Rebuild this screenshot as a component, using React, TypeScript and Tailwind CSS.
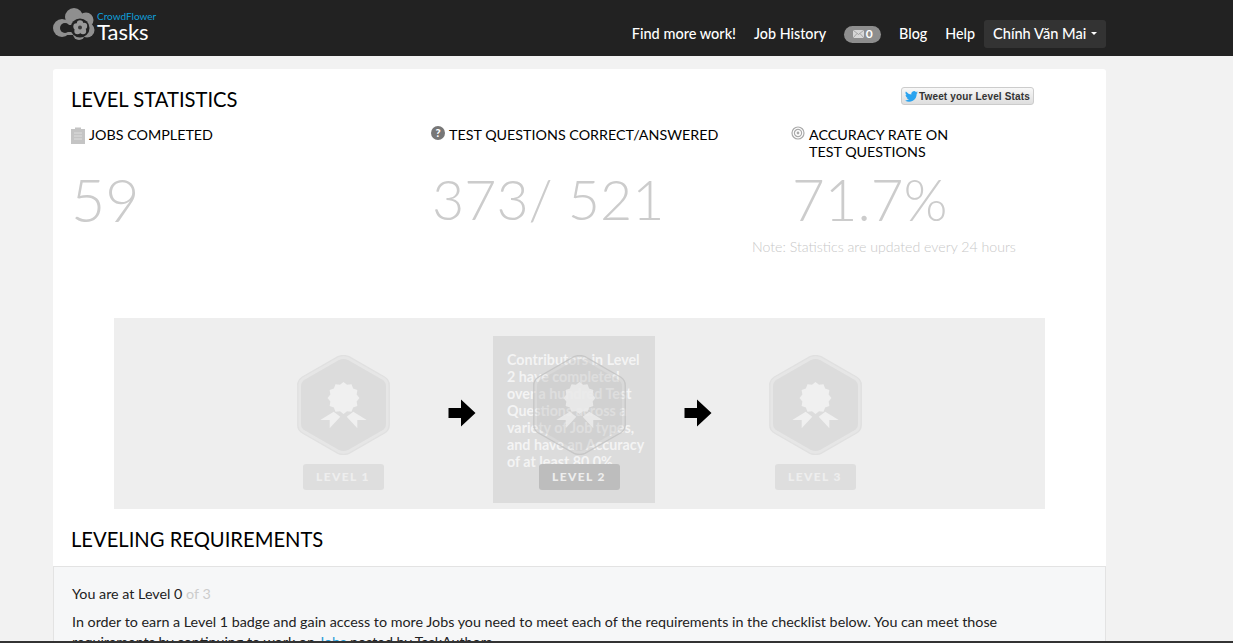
import React from "react";

const star = Array.from({ length: 24 })
  .map((_, i) => {
    const a = (i * Math.PI) / 12 - Math.PI / 2;
    const r = i % 2 === 0 ? 16 : 13.6;
    return `${(46.5 + r * Math.cos(a)).toFixed(2)},${(43 + r * Math.sin(a)).toFixed(2)}`;
  })
  .join(" ");

const Badge = ({ label, dark }: { label: string; dark?: boolean }) => (
  <div className="relative w-[162px] flex flex-col items-center">
    <svg width="93" height="100" viewBox="0 0 93 100" className="block">
      <path
        d="M41 1.7 Q46.5 -0.6 52 1.7 L87.5 22 Q92.2 25 92.2 30 L92.2 70 Q92.2 75 87.5 78 L52 98.3 Q46.5 100.6 41 98.3 L5.5 78 Q0.8 75 0.8 70 L0.8 30 Q0.8 25 5.5 22 Z"
        fill={dark ? "#c9c9c9" : "#e6e6e6"}
        fillOpacity={dark ? 0.15 : 1}
        stroke={dark ? "#c2c2c2" : "#e0e0e0"}
        strokeOpacity={dark ? 0.8 : 1}
        strokeWidth="1.4"
      />
      <path
        d="M42 5 Q46.5 3 51 5 L85 24.5 Q89 27 89 31 L89 69 Q89 73 85 75.5 L51 95 Q46.5 97 42 95 L8 75.5 Q4 73 4 69 L4 31 Q4 27 8 24.5 Z"
        fill={dark ? "#c4c4c4" : "#dcdcdc"}
        fillOpacity={dark ? 0.35 : 1}
      />
      <polygon points={star} fill={dark ? "#ececec" : "#f0f0f0"} fillOpacity={dark ? 0.85 : 1} />
      <path
        d="M23.3 65 L36.7 56.7 L43.3 61.7 L32.7 73.3 L32.7 65 Z M69.7 65 L56.3 56.7 L49.7 61.7 L60.3 73.3 L60.3 65 Z"
        fill={dark ? "#ececec" : "#f0f0f0"}
        fillOpacity={dark ? 0.85 : 1}
      />
    </svg>
    <div
      className={`mt-[9px] w-[81px] h-[26px] rounded-[3px] flex items-center justify-center text-[12px] font-black tracking-[1.4px] text-[#eeeeee] ${
        dark ? "bg-[#bdbdbd]" : "bg-[#dedede]"
      }`}
    >
      {label}
    </div>
  </div>
);

const Arrow = () => (
  <svg width="28" height="28" viewBox="0 0 28 28" className="block mt-[44px] ml-[1px] -mr-[1px]">
    <path d="M0.5 9 H13 V0.5 L27.5 14 L13 27.5 V19 H0.5 Z" fill="#000" />
  </svg>
);

export default function App() {
  return (
    <div className="h-[643px] overflow-hidden bg-[#f2f2f2] relative font-['Lato','Liberation_Sans',sans-serif] text-[#000]">
      <header className="h-[56px] bg-[#222222]">
        <div className="ml-[53px] w-[1053px] flex justify-between">
          <div className="flex items-start pt-[8px]">
            <svg width="42" height="32" viewBox="0 0 42 32" className="block">
              <circle cx="9" cy="20" r="9" fill="#8f8f8f" />
              <circle cx="21" cy="9" r="9" fill="#8f8f8f" />
              <circle cx="33" cy="12" r="7.5" fill="#8f8f8f" />
              <circle cx="34" cy="22" r="7.5" fill="#8f8f8f" />
              <circle cx="26" cy="26" r="6" fill="#8f8f8f" />
              <rect x="12" y="13" width="16" height="14" fill="#8f8f8f" />
              <circle cx="12" cy="20" r="5" fill="#222222" />
              <rect x="12" y="17" width="8" height="7" fill="#222222" />
              <circle cx="27" cy="20" r="9.5" fill="#222222" />
              <circle cx="23.5" cy="18.5" r="3.2" fill="#9a9a9a" />
              <circle cx="27" cy="15.5" r="3.2" fill="#9a9a9a" />
              <circle cx="31" cy="18" r="3.2" fill="#9a9a9a" />
              <circle cx="30" cy="23" r="3.2" fill="#9a9a9a" />
              <circle cx="24.5" cy="23" r="3.2" fill="#9a9a9a" />
              <circle cx="27" cy="19.5" r="2" fill="#3a3a3a" />
            </svg>
            <div className="ml-[2px] mt-[3px] flex flex-col">
              <span className="text-[10px] leading-[11px] text-[#0f9fdb]">CrowdFlower</span>
              <span className="text-[22px] leading-[19px] text-white">Tasks</span>
            </div>
          </div>
          <nav className="flex items-center h-[28px] mt-[20px] text-white text-[14.3px] font-medium">
            <a className="mr-[18px] text-[14.5px]">Find more work!</a>
            <a className="mr-[18px]">Job History</a>
            <span className="mr-[18px] w-[37px] h-[17px] rounded-full bg-[#8e8e8e] flex items-center justify-center gap-[2px] text-[12px] font-bold">
              <svg width="11" height="8" viewBox="0 0 11 8">
                <rect width="11" height="8" fill="#d8d8d8" />
                <path d="M0 0 L5.5 4.5 L11 0 M0 8 L4 3.5 M11 8 L7 3.5" fill="none" stroke="#8e8e8e" strokeWidth="0.7" />
              </svg>
              0
            </span>
            <a className="mr-[18px]">Blog</a>
            <a className="mr-[9px]">Help</a>
            <button className="h-[28px] pl-[9px] w-[122px] rounded-[3px] bg-[#333333] flex items-center whitespace-nowrap text-white text-[14.6px] font-medium">
              Chính Văn Mai
              <span className="ml-[5px] mb-[2px] w-0 h-0 border-x-[3px] border-x-transparent border-t-[3px] border-t-white" />
            </button>
          </nav>
        </div>
      </header>

      <main className="ml-[53px] w-[1053px] mt-[13px] bg-white rounded-t-[3px]">
        <div className="px-[18px] pt-[19px]">
          <div className="flex justify-between items-start">
            <h2 className="text-[20.2px] leading-[22px] font-normal">LEVEL STATISTICS</h2>
            <button className="mr-[54px] -mt-[1px] w-[133px] h-[18px] rounded-[3px] border border-[#cccccc] bg-gradient-to-b from-[#f8f8f8] to-[#dedede] flex items-center pl-[3px] gap-[1px] whitespace-nowrap text-[10px] font-bold text-[#333333] tracking-[0.15px] font-['Liberation_Sans',sans-serif]">
              <svg width="13" height="11" viewBox="0 0 24 20">
                <path d="M24 2.4a9.8 9.8 0 0 1-2.8.8A4.9 4.9 0 0 0 23.3.5a9.8 9.8 0 0 1-3.1 1.2 4.9 4.9 0 0 0-8.4 4.5A14 14 0 0 1 1.7.9a4.9 4.9 0 0 0 1.5 6.6 4.9 4.9 0 0 1-2.2-.6 4.9 4.9 0 0 0 3.9 4.9 4.9 4.9 0 0 1-2.2.1 4.9 4.9 0 0 0 4.6 3.4A9.9 9.9 0 0 1 0 17.3 14 14 0 0 0 21.5 5a10 10 0 0 0 2.5-2.6Z" fill="#2aa3ef" />
              </svg>
              Tweet your Level Stats
            </button>
          </div>

          <div className="grid grid-cols-[360px_360px_1fr] mt-[16px]">
            <div>
              <div className="flex text-[14.3px] leading-[17px]">
                <svg width="14" height="17" viewBox="0 0 14 17" className="mr-[4px] mt-[1px]">
                  <path d="M0 2 H4 V0.5 H10 V2 H14 V17 H0 Z" fill="#c4c4c4" />
                  <path d="M3 6 H11 M3 9 H11 M3 12 H11" stroke="#dddddd" strokeWidth="1" />
                </svg>
                JOBS COMPLETED
              </div>
              <div className="mt-[26px] text-[59px] leading-[60px] font-light text-[#cccccc]">59</div>
            </div>
            <div>
              <div className="flex text-[14.3px] leading-[17px]">
                <svg width="14" height="14" viewBox="0 0 14 14" className="mr-[4px]">
                  <circle cx="7" cy="7" r="7" fill="#777777" />
                  <text x="7" y="11" textAnchor="middle" fontSize="11" fontWeight="900" fill="#ffffff" fontFamily="Lato">?</text>
                </svg>
                TEST QUESTIONS CORRECT/ANSWERED
              </div>
              <div className="mt-[26px] ml-[1px] text-[55.5px] leading-[60px] font-light text-[#cccccc]">373/ 521</div>
            </div>
            <div>
              <div className="flex text-[14.3px] leading-[17px]">
                <svg width="14" height="14" viewBox="0 0 14 14" className="mr-[4px]">
                  <circle cx="7" cy="7" r="6" fill="none" stroke="#aaaaaa" strokeWidth="1.2" />
                  <circle cx="7" cy="7" r="3.6" fill="none" stroke="#aaaaaa" strokeWidth="1.2" />
                  <circle cx="7" cy="7" r="1.4" fill="#aaaaaa" />
                </svg>
                <span>ACCURACY RATE ON<br />TEST QUESTIONS</span>
              </div>
              <div className="mt-[9px] ml-[1px] text-[56.5px] leading-[60px] font-light text-[#cccccc]">71.7%</div>
            </div>
          </div>
          <p className="mt-[7px] ml-[681px] text-[14.15px] leading-[20px] font-light text-[#c8c8c8]">Note: Statistics are updated every 24 hours</p>
        </div>

        <section className="ml-[61px] mt-[61px] w-[931px] h-[191px] bg-[#eeeeee] flex items-start gap-[23px] pl-[148px] pt-[37px]">
          <Badge label="LEVEL 1" />
          <Arrow />
          <div className="relative">
            <div className="absolute -left-[5px] -top-[19px] w-[162px] h-[167px] bg-[#dcdcdc] pl-[14px] pt-[15px] pr-[8px]">
              <p className="text-[14.3px] leading-[17px] font-bold text-white/70">
                Contributors in Level 2 have completed over a hundred Test Questions across a variety of Job types, and have an Accuracy of at least 80.0%.
              </p>
            </div>
            <Badge label="LEVEL 2" dark />
          </div>
          <Arrow />
          <Badge label="LEVEL 3" />
        </section>

        <h2 className="mt-[18px] px-[18px] text-[20.2px] leading-[24px] font-normal">LEVELING REQUIREMENTS</h2>

        <section className="mt-[15px] h-[100px] border border-[#e3e3e3] bg-[#f6f7f8] pl-[18px] pr-[60px] pt-[17px] text-[14.3px] leading-[20px] text-[#222222]">
          <p>You are at Level 0 <span className="text-[#cccccc]">of 3</span></p>
          <p className="mt-[8px]">
            In order to earn a Level 1 badge and gain access to more Jobs you need to meet each of the requirements in the checklist below. You can meet those requirements by continuing to work on <a className="text-[#2a9fd8]">Jobs</a> posted by TaskAuthors.
          </p>
        </section>
      </main>
      <div className="absolute left-0 right-0 bottom-0 h-[2px] bg-[#333333]" />
    </div>
  );
}
